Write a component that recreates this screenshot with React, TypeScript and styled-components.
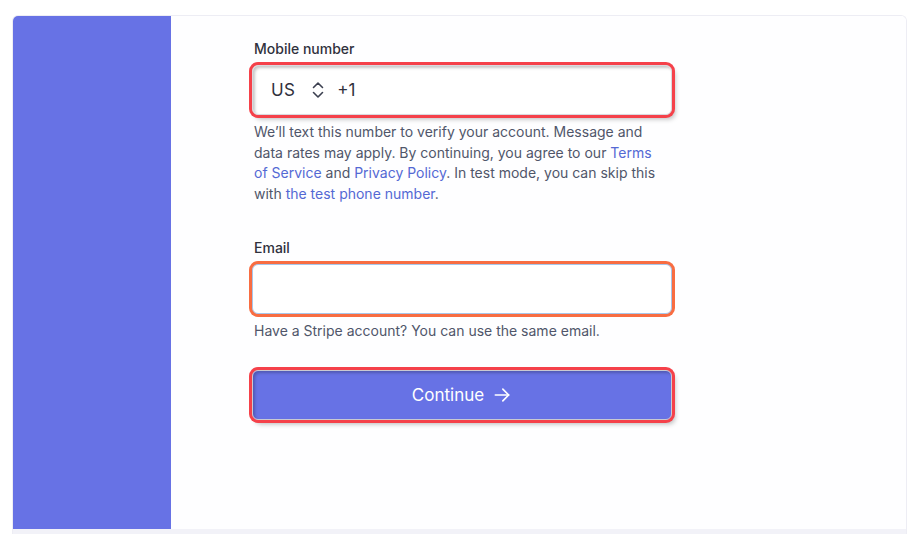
import React from 'react';
import styled, { createGlobalStyle } from 'styled-components';

const brand = '#6772e5';
const ink = '#30313d';
const muted = '#50566a';
const link = '#5469d4';

const GlobalStyle = createGlobalStyle`
    html, body {
        margin: 0;
        background: #ffffff;
    }
    body {
        font-family: Inter, "Noto Sans", sans-serif;
        -webkit-font-smoothing: antialiased;
    }
`;

const ChevronsIcon: React.FC = () => (
    <svg width='16' height='18' viewBox='0 0 16 18' fill='none' stroke='currentColor' strokeWidth='1.6' strokeLinecap='round' strokeLinejoin='round'>
        <path d='M3.5 6.5 8 2l4.5 4.5' />
        <path d='M3.5 11.5 8 16l4.5-4.5' />
    </svg>
);

const ArrowIcon: React.FC = () => (
    <svg width='20' height='20' viewBox='0 0 24 24' fill='none' stroke='currentColor' strokeWidth='2' strokeLinecap='round' strokeLinejoin='round'>
        <path d='M4 12h16' />
        <path d='m13 5 7 7-7 7' />
    </svg>
);

const App: React.FC = () => {
    return (
        <>
            <GlobalStyle />
            <Card>
                <Sidebar />
                <Main>
                    <Form>
                        <Label>Mobile number</Label>
                        <Field ring='#f5414a' inset height={50}>
                            <Country>US</Country>
                            <Chevrons>
                                <ChevronsIcon />
                            </Chevrons>
                            <Prefix>+1</Prefix>
                        </Field>
                        <Help>
                            We’ll text this number to verify your account. Message and data rates may apply.
                            By continuing, you agree to our <A>Terms of Service</A> and <A>Privacy Policy</A>.
                            In test mode, you can skip this with <A>the test phone number</A>.
                        </Help>

                        <Label spaced>Email</Label>
                        <Field ring='#f86d42' focused height={50} />
                        <Help>Have a Stripe account? You can use the same email.</Help>

                        <Button ring='#f5414a'>
                            Continue
                            <ArrowIcon />
                        </Button>
                    </Form>
                </Main>
                <Footer />
            </Card>
        </>
    );
};

export default App;

const Card = styled.div`
    margin: 15px 0 0 12px;
    width: 895px;
    height: 519px;
    display: grid;
    grid-template-columns: 158px 1fr;
    grid-template-rows: 1fr 5px;
    border: 1px solid #ededf4;
    border-bottom: none;
    border-radius: 6px 6px 0 0;
    box-sizing: border-box;
    overflow: hidden;
`;

const Sidebar = styled.aside`
    background: ${brand};
`;

const Main = styled.main`
    padding: 23px 0 0 81px;
    background: #fefeff;
`;

const Footer = styled.div`
    grid-column: 1 / -1;
    background: #f2f2f8;
`;

const Form = styled.div`
    width: 420px;
    display: flex;
    flex-direction: column;
`;

const Label = styled.label<{ spaced?: boolean }>`
    font-size: 14px;
    line-height: 20px;
    font-weight: 500;
    color: ${ink};
    padding-left: 2px;
    margin-top: ${(p) => (p.spaced ? '34px' : '0')};
    margin-bottom: 6px;
`;

const Field = styled.div<{ ring: string; height: number; inset?: boolean; focused?: boolean }>`
    height: ${(p) => p.height}px;
    box-sizing: border-box;
    display: flex;
    align-items: center;
    padding: 0 18px;
    background: #ffffff;
    border-radius: 6px;
    border: 1px solid ${(p) => (p.focused ? '#a8c6ea' : '#d9d9de')};
    box-shadow:
        ${(p) => (p.inset ? 'inset 2px 2px 3px rgba(0, 0, 0, 0.22),' : '')}
        0 0 0 3px ${(p) => p.ring},
        ${(p) => (p.inset ? '3px 4px 5px rgba(0, 0, 0, 0.28)' : '0 0 0 0 transparent')};
    color: ${ink};
`;

const Country = styled.span`
    font-size: 17px;
    letter-spacing: 0.3px;
`;

const Chevrons = styled.span`
    display: flex;
    margin: 0 11px 0 15px;
    color: #3c4050;
`;

const Prefix = styled.span`
    font-size: 17px;
`;

const Help = styled.p`
    width: 412px;
    margin: 7px 0 0;
    padding-left: 2px;
    font-size: 14px;
    line-height: 20.5px;
    color: ${muted};
`;

const A = styled.a`
    color: ${link};
    text-decoration: none;
    cursor: pointer;
`;

const Button = styled.button<{ ring: string }>`
    margin-top: 28px;
    height: 50px;
    display: flex;
    align-items: center;
    justify-content: center;
    gap: 8px;
    border-radius: 6px;
    border: 1px solid #c9c9d2;
    background: ${brand};
    color: #ffffff;
    font-family: inherit;
    font-size: 17px;
    font-weight: 400;
    box-shadow:
        inset 2px 2px 3px rgba(0, 0, 0, 0.22),
        0 0 0 3px ${(p) => p.ring},
        3px 4px 5px rgba(0, 0, 0, 0.28);
    cursor: pointer;
`;
